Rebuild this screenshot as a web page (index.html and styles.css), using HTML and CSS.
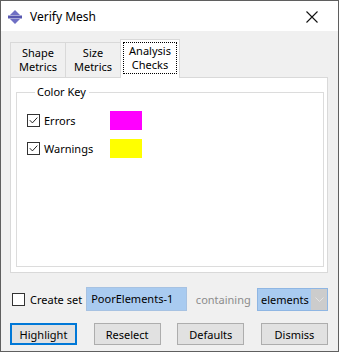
FILE: index.html
```html
<!DOCTYPE html>
<html lang="en">
<head>
  <meta charset="UTF-8">
  <title>Verify Mesh</title>
  <link rel="stylesheet" href="styles.css">
</head>
<body>
  <div class="window">
    <div class="titlebar">
      <svg class="app-icon" width="14" height="14" viewBox="0 0 14 14">
        <polygon points="7,0 12,5 2,5" fill="#6f6fc4"/>
        <rect x="0" y="5.5" width="14" height="3" fill="#5757b0"/>
        <polygon points="2,9 12,9 7,14" fill="#6f6fc4"/>
      </svg>
      <span class="title">Verify Mesh</span>
      <svg class="close" width="12" height="12" viewBox="0 0 12 12">
        <path d="M0.5 0.5 L11.5 11.5 M11.5 0.5 L0.5 11.5" stroke="#111" stroke-width="1.1"/>
      </svg>
    </div>

    <div class="content">
      <div class="tabs">
        <div class="tab">Shape<br>Metrics</div>
        <div class="tab">Size<br>Metrics</div>
        <div class="tab active"><span class="focus">Analysis<br>Checks</span></div>
      </div>

      <div class="panel">
        <fieldset class="group">
          <legend>Color Key</legend>
          <div class="key-row">
            <span class="check checked"></span>
            <span class="key-label">Errors</span>
            <span class="swatch magenta"></span>
          </div>
          <div class="key-row">
            <span class="check checked"></span>
            <span class="key-label">Warnings</span>
            <span class="swatch yellow"></span>
          </div>
        </fieldset>
      </div>

      <div class="set-row">
        <span class="check"></span>
        <span class="set-label">Create set</span>
        <span class="field">PoorElements-1</span>
        <span class="dim">containing</span>
        <span class="combo"><span class="combo-text">elements</span><span class="combo-arrow">
          <svg width="9" height="5" viewBox="0 0 9 5"><path d="M0.5 0.5 L4.5 4.5 L8.5 0.5" stroke="#e4e4e4" fill="none"/></svg>
        </span></span>
      </div>

      <div class="buttons">
        <button class="btn default">Highlight</button>
        <button class="btn">Reselect</button>
        <button class="btn">Defaults</button>
        <button class="btn">Dismiss</button>
      </div>
    </div>
  </div>
</body>
</html>
```

FILE: styles.css
```css
body {
  margin: 0;
  font-family: "Noto Sans", "Open Sans", sans-serif;
  font-size: 11px;
  color: #000;
  background: #fff;
}
.window {
  width: 339px;
  height: 352px;
  box-sizing: border-box;
  border: 1px solid #5f5f5f;
  display: flex;
  flex-direction: column;
  background: #f0f0f0;
}
.titlebar {
  height: 30px;
  background: #fff;
  display: flex;
  align-items: center;
  padding: 0 0 0 7px;
}
.app-icon {
  margin-top: 1px;
}
.title {
  margin-left: 8px;
  font-size: 12px;
  margin-top: 1px;
}
.close {
  margin-left: auto;
  margin-right: 20px;
  margin-top: 1px;
}
.content {
  flex: 1;
  display: flex;
  flex-direction: column;
  padding: 8px 10px 0 9px;
}
.tabs {
  display: flex;
  align-items: flex-end;
  height: 38px;
}
.tab {
  width: 55px;
  height: 35px;
  box-sizing: border-box;
  border: 1px solid #d9d9d9;
  border-bottom: none;
  border-right: none;
  background: #f0f0f0;
  text-align: center;
  line-height: 14px;
  padding-top: 3px;
}
.tab.active {
  width: 60px;
  height: 39px;
  margin-bottom: -1px;
  border-right: 1px solid #d9d9d9;
  background: #fff;
  position: relative;
  padding-top: 2px;
}
.focus {
  display: block;
  margin: 0 2px;
  height: 32px;
  box-sizing: border-box;
  border: 1px dotted #000;
  padding-top: 1px;
}
.panel {
  height: 196px;
  box-sizing: border-box;
  border: 1px solid #d9d9d9;
  background: #fff;
  padding: 7px 3px 5px 5px;
  display: flex;
}
.group {
  flex: 1;
  margin: 0;
  padding: 12px 0 0 10px;
  border: 1px solid #dcdcdc;
  min-width: 0;
}
.group legend {
  margin-left: 8px;
  padding: 0 3px 0 2px;
  line-height: 14px;
}
.key-row {
  display: flex;
  align-items: center;
  height: 19px;
  margin-bottom: 9px;
}
.check {
  width: 13px;
  height: 13px;
  box-sizing: border-box;
  border: 1px solid #333;
  background: #fff;
  flex: none;
  position: relative;
}
.check.checked::after {
  content: "";
  position: absolute;
  left: 1px;
  top: 1px;
  width: 9px;
  height: 9px;
  background: url("data:image/svg+xml,%3Csvg xmlns='http://www.w3.org/2000/svg' width='9' height='9'%3E%3Cpath d='M0.8 4.2 L3.4 6.9 L8.3 1.6' stroke='%23222' stroke-width='1' fill='none'/%3E%3C/svg%3E");
}
.key-label {
  width: 66px;
  margin-left: 4px;
}
.swatch {
  width: 32px;
  height: 19px;
}
.magenta { background: #ff00ff; }
.yellow { background: #ffff00; }

.set-row {
  display: flex;
  align-items: center;
  margin-top: 14px;
  height: 24px;
}
.set-row .check {
  margin-left: 2px;
}
.set-label {
  margin-left: 5px;
  width: 57px;
}
.field {
  width: 102px;
  height: 24px;
  box-sizing: border-box;
  border: 1px solid #a7c2e2;
  background: #a9cbf0;
  padding: 3px 0 0 4px;
  line-height: 16px;
}
.dim {
  color: #8c8c8c;
  margin-left: 9px;
  width: 62px;
}
.combo {
  display: flex;
  width: 72px;
  height: 23px;
  box-sizing: border-box;
  border: 1px solid #8fb6e3;
  background: #a9cbf0;
}
.combo-text {
  flex: 1;
  padding: 3px 0 0 3px;
  line-height: 15px;
}
.combo-arrow {
  width: 16px;
  background: #cccccc;
  display: flex;
  align-items: center;
  justify-content: center;
}
.buttons {
  display: flex;
  justify-content: space-between;
  margin-top: 12px;
  margin-right: 0;
}
.btn {
  width: 67px;
  height: 22px;
  box-sizing: border-box;
  border: 1px solid #adadad;
  background: #e1e1e1;
  font-family: inherit;
  font-size: 11px;
  padding: 0;
  color: #000;
}
.btn.default {
  border: 2px solid #0078d7;
}
```
